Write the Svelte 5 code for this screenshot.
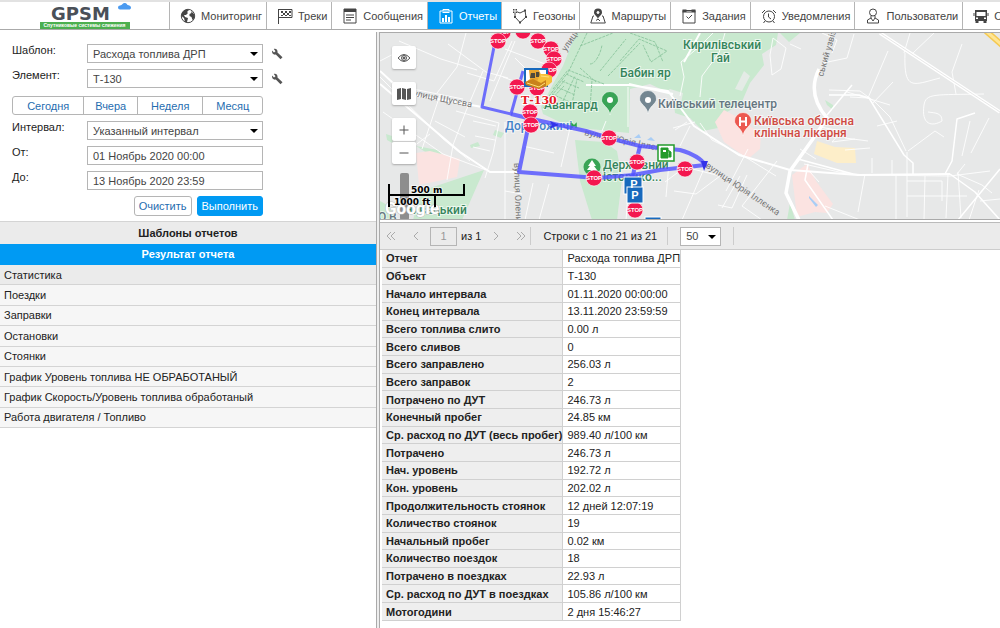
<script lang="ts">
	type Tab = { id: string; label: string };

	const tabs: Tab[] = [
		{ id: 'monitoring', label: 'Мониторинг' },
		{ id: 'tracks', label: 'Треки' },
		{ id: 'messages', label: 'Сообщения' },
		{ id: 'reports', label: 'Отчеты' },
		{ id: 'geofences', label: 'Геозоны' },
		{ id: 'routes', label: 'Маршруты' },
		{ id: 'jobs', label: 'Задания' },
		{ id: 'notifications', label: 'Уведомления' },
		{ id: 'users', label: 'Пользователи' },
		{ id: 'units', label: 'Объекты' }
	];

	const sections = [
		'Статистика',
		'Поездки',
		'Заправки',
		'Остановки',
		'Стоянки',
		'График Уровень топлива НЕ ОБРАБОТАНЫЙ',
		'График Скорость/Уровень топлива обработаный',
		'Работа двигателя / Топливо'
	];

	const stats = [
		['Отчет', 'Расхода топлива ДРП'],
		['Объект', 'Т-130'],
		['Начало интервала', '01.11.2020 00:00:00'],
		['Конец интервала', '13.11.2020 23:59:59'],
		['Всего топлива слито', '0.00 л'],
		['Всего сливов', '0'],
		['Всего заправлено', '256.03 л'],
		['Всего заправок', '2'],
		['Потрачено по ДУТ', '246.73 л'],
		['Конечный пробег', '24.85 км'],
		['Ср. расход по ДУТ (весь пробег)', '989.40 л/100 км'],
		['Потрачено', '246.73 л'],
		['Нач. уровень', '192.72 л'],
		['Кон. уровень', '202.02 л'],
		['Продолжительность стоянок', '12 дней 12:07:19'],
		['Количество стоянок', '19'],
		['Начальный пробег', '0.02 км'],
		['Количество поездок', '18'],
		['Потрачено в поездках', '22.93 л'],
		['Ср. расход по ДУТ в поездках', '105.86 л/100 км'],
		['Мотогодини', '2 дня 15:46:27']
	];

	const stops = [
		[503, 31], [498, 40], [523, 30], [538, 40], [551, 48], [554, 58], [549, 69],
		[517, 86], [537, 87], [530, 111], [531, 124], [609, 137], [637, 161],
		[594, 177], [685, 168], [635, 209]
	];

	let activeTab = $state('reports');
	let activeSection = $state('Статистика');
	let from = $state('01 Ноябрь 2020 00:00');
	let to = $state('13 Ноябрь 2020 23:59');
	let page = $state('1');
</script>

{#snippet arrow()}
	<svg class="arrow" viewBox="0 0 8 4" aria-hidden="true"><path d="M0 0h8L4 4z" /></svg>
{/snippet}

{#snippet wrench()}
	<button class="wrench" aria-label="Свойства">
		<svg viewBox="0 0 12 12"><path d="M1 2.500 3 4.500 4.500 3.200 2.800 1C5 .3 7 2 6.500 4.400L11.500 9.300 9.500 11.300 4.800 6.500C2.500 7.200.5 5 1 2.500z" fill="#555" /></svg>
	</button>
{/snippet}

{#snippet pin(x: number, y: number, fill: string)}
	<path
		transform="translate({x} {y})"
		d="M0 13C-1 5-8.500 3-8.500-2a8.500 8.500 0 0 1 17 0C8.500 3 1 5 0 13z"
		{fill}
		stroke="#fff"
		stroke-width=".6"
	/>
{/snippet}

{#snippet icon(id: string)}
	<svg class="icon" viewBox="0 0 16 16" aria-hidden="true">
		{#if id === 'monitoring'}
			<circle cx="8" cy="8" r="6.700" />
			<path class="solid" d="M2 5C4 1 8 1 9 2L7 4 8 5 6 7 4 7 5 9 8 10 7 14 5 14 4 10 1.500 8zM11 3l3 3 .5 4-2 2-1-3-2-1 0-2 2-1z" />
		{:else if id === 'tracks'}
			<path d="M1.500 1v15M1.500 1.500H15v8H1.500" />
			<path class="solid" d="M4 3h2v2H4zM8 3h2v2H8zM12 3h2v2h-2zM6 5h2v2H6zM10 5h2v2h-2zM4 7h2v1H4zM8 7h2v1H8zM12 7h2v1h-2z" />
		{:else if id === 'messages'}
			<path d="M2 1h12v14H2z" />
			<path class="solid" d="M2 1h12v3H2z" />
			<path d="M4 7h8M4 9.500h8M4 12h5" />
		{:else if id === 'reports'}
			<path d="M2 3h12v12H2zM5 3V1.500h6V3" />
			<path d="M4.500 4.500h7" />
			<path class="solid" d="M4 10h2v4H4zM7 7h2v7H7zM10 9h2v5h-2z" />
		{:else if id === 'geofences'}
			<path d="M3 3 8 5 13 2.500 14 9 8 14.500 3 9z" />
			<path class="solid" d="M1 1h4v4H1zM12 1.500h2v2h-2zM13 8h2v2h-2zM7 13.500h2v2H7zM2 8h2v2H2z" />
			<path d="M2 2h2v2H2z" stroke="#fff" />
		{:else if id === 'routes'}
			<path d="M4 8H3L.8 15h14.500L13 8h-1M6 12.500l2-1.500 2 2" />
			<path class="solid" d="M8 11C7.500 8 4 7.500 4 4.500a4 4 0 0 1 8 0C12 7.500 8.500 8 8 11z" />
			<circle cx="8" cy="4.500" r="1" stroke="#fff" fill="#fff" />
		{:else if id === 'jobs'}
			<path d="M2 2.500h12V15H2zM5.500 8.500l2 2L11 7" />
			<path class="solid" d="M1.500 1.500h4v2h5v-2h4v3h-13z" />
		{:else if id === 'notifications'}
			<circle cx="8" cy="8.500" r="5.500" />
			<path d="M7.500 5.500V9l2.500 2M1 5 4 2M15 5l-3-3M4 13l-1.500 2M12 13l1.500 2" />
		{:else if id === 'users'}
			<circle cx="8" cy="4.500" r="3.500" />
			<path d="M6 8v2L2.500 12v3h11v-3L10 10V8M6 10l2 3 2-3" />
		{:else}
			<path class="solid" fill-rule="evenodd" d="M2 2h12v11H2zM3.500 4v4h9V4zM3 9.500v1.500h2V9.500zM11 9.500v1.500h2V9.500zM2.500 13h3v2h-3zM10.500 13h3v2h-3zM.5 5h1v3h-1zM14.500 5h1v3h-1z" />
		{/if}
	</svg>
{/snippet}

<div class="app">
	<header>
		<a class="logo" href="#home" aria-label="GPSM">
			<span class="brand">GPSM</span>
			<svg class="cloud" viewBox="0 0 13 8" aria-hidden="true"><path d="M2 7.500a2 2 0 0 1 0-4C3 3 4 3 4.500 2a3 3 0 0 1 5 1C11 3 13 4 13 5.500s-1 2-2 2z" fill="#4a9af0" /></svg>
			<span class="slogan">Спутниковые системы слежения</span>
		</a>
		<nav>
			{#each tabs as tab (tab.id)}
				<button class="tab" class:active={activeTab === tab.id} onclick={() => (activeTab = tab.id)}>
					{@render icon(tab.id)}
					{tab.label}
				</button>
			{/each}
		</nav>
	</header>

	<main>
		<aside>
			<form onsubmit={(e) => e.preventDefault()}>
				<label for="template">Шаблон:</label>
				<div class="select">
					<select id="template"><option>Расхода топлива ДРП</option></select>
					{@render arrow()}
				</div>
				{@render wrench()}

				<label for="unit">Элемент:</label>
				<div class="select">
					<select id="unit"><option>Т-130</option></select>
					{@render arrow()}
				</div>
				{@render wrench()}

				<div class="periods">
					<button>Сегодня</button>
					<button>Вчера</button>
					<button>Неделя</button>
					<button>Месяц</button>
				</div>

				<label for="interval">Интервал:</label>
				<div class="select">
					<select id="interval"><option>Указанный интервал</option></select>
					{@render arrow()}
				</div>

				<label for="from">От:</label>
				<input id="from" type="text" bind:value={from} />

				<label for="to">До:</label>
				<input id="to" type="text" bind:value={to} />

				<div class="actions">
					<button type="reset">Очистить</button>
					<button type="submit" class="primary">Выполнить</button>
				</div>
			</form>

			<h2>Шаблоны отчетов</h2>
			<h2 class="current">Результат отчета</h2>
			<ul>
				{#each sections as section (section)}
					<li>
						<button class:selected={activeSection === section} onclick={() => (activeSection = section)}>
							{section}
						</button>
					</li>
				{/each}
			</ul>
		</aside>

		<div class="splitter"></div>

		<section class="content">
			<div class="map">
				<svg class="canvas" viewBox="380 32 620 187" preserveAspectRatio="xMidYMid slice">
					<rect x="380" y="32" width="620" height="187" fill="#e7e8e8" />

					<!-- parks, hospitals, built-up areas -->
					<g fill="#c9e9cf">
						<path d="M576 32H778L776 44 762 53 764 64 750 82 741 103 727 111 718 127 703 130 690 117 675 112 673 94 650 83 630 88 629 132 580 127 564 123 543 113 541 106 553 83 563 65z" />
						<path d="M575 139 604 141 617 150 622 178 617 219H592L580 180z" />
						<path d="M413 219 421 190 484 169 462 219z" />
						<path d="M386 133 395 136 394 143 387 139zM416 145l22 4 5 6-16-3zM495 129l9 3-3 5-8-3zM470 144l8-3 2 4-9 2zM780 32h20l-11 9zM825 99l8 5v5l-6-5zM790 202l5 17h-8zM380 200l9 5 8 14h-17z" />
					</g>
					<g fill="#fbe3e1">
						<path d="M416 152 430 150 460 158 457 176 419 184z" />
						<path d="M715 121 724 109 739 117 761 133 760 148 748 158 724 141z" />
						<path d="M792 174 807 163 816 180 833 203 827 212 815 211 797 216z" />
					</g>
					<path d="M817 140 835 146 855 147 856 162 837 162 814 153z" fill="#fdeec9" />
					<path d="M634 137l5-4 2 4zM647 139l4-3 4 4zM809 195l9 9-2 2-7-9z" fill="#a9cdf5" />
					<path d="M744 70 750 75 742 90 735 88zM664 92l6-4 13 4-2 10-10-4z" fill="#e4ebe6" />

					<!-- streets -->
					<g fill="none" stroke="#fff" stroke-linejoin="round">
						<g stroke-width="1" stroke-opacity=".85">
							<path d="M380 76 404 100 443 138 470 160M399 40l42 18 36 11M440 94l-18 54M466 32l-9 34-20 26M483 70l-17 40-13 34-6 35M383 111l60 42 43 16M448 43 486 71 508 77M413 88l50 10M467 72l27 8M456 110l43 12-6 30-8 25M473 120l23 5M475 135l20 4M490 150l-17-4M380 60l25-13M405 152l25-19M435 120l30 16M505 121v98M533 182l-8 37M549 183l-10 36M505 190l17 3M523 145l31 7M570 127l-9 39M512 40 494 80M505 48l40 15M515 57l30 30M503 76l32 12M490 100l25-60" />
							<path d="M628 86V126M629 180 626 219M606 120l-4 10M680 95 684 76 681 61 700 45 713 32M700 96 702 75 719 52 725 32M673 127l22-6M675 129l12-8M680 145l10-20M670 150l-4 46M665 181l20-15 35 9-24 18-22-3M706 163l-24 56M740 175l-18 32M747 174l-15 33-14-3M700 122l12 17 30 15 34 21M748 148l-22 42M777 160l-35 45 20 14" />
							<path d="M823 62l24-5 7-24M829 89l31 1 15 11 15 15 16 34M847 91l43 13M877 125l20-5M850 96l18 1 20-47M872 103l21-22M910 32l-6 20M905 52c-1 30 4 33 20 29l15-4M934 32l-21 20M962 43l-10 28 4 22M924 104c2-12 10-10 60-11M924 104c-3 20 8 22 18 16 0-8-6-8-14-9M908 150l27-20 9 6M804 163l35 8 25 3 86 1 40-5M865 173l-7 38M896 174v45M907 151v65M925 175l-1 44M948 173l-2 44M958 171l3 46M907 195h60M907 180h35v20M872 172v-15M892 174v-15M810 171l9 10M800 148l16 10M820 126l22 4-10 11 23-3M845 137l23 3M845 149l25-2" />
							<path d="M790 43 801 48M965 163l-8 10 25 11 10 8M979 189l-10 30M980 200l20-2M970 120l-8 35M971 152l18-35M822 32l15 7-5 13M825 205l35 14M770 54l3-17 13 10-5 21-9 6z" />
						</g>
						<path d="M380 70 405 93 444 99 482 106M380 83l80 68 30 20h29M586 84 630 84 668 90 694 125 739 154 790 169 858 174 950 173M629 83l44 10M700 32l-16 29" stroke-width="2" />
						<path d="M829 94h30l10 3 35 57 9 8v12M827 114l25-30M950 173l25 18 25 28M798 158l55 15M808 163l-3 16 28 40M1000 168l-42 51M945 173l7-13 5-42 18-6" stroke-width="1.500" />
						<path d="M819 68c-9 18-4 35 8 49l-12 18L790 170l-4 22 13 27M880 32l120 79" stroke-width="3.500" />
						<path d="M880 32l120 79" stroke="#ddd" stroke-width=".7" />
					</g>
					<path d="M553 88l15-19 36 14M549 95l17-21M546 101l19-22M543 107l21-22M563 100l12-25M572 103l5-25M590 107l2-28M552 93l20 9M557 86l18 8M562 80l17 7M566 73l18 8M587 32l-20 42M580 45 613 32M580 67l16 14M590 63c6 0 11-12 12-19M600 70l26-32M620 60l19-22 28 12-16 11-8-17M608 75l32-33M630 32l25 9 8 20" fill="none" stroke="#91c9a2" stroke-dasharray="3 1" />
					<path d="M986 30 1002 44" stroke="#f5c950" stroke-width="6" />
					<path d="M986 30 1002 44" stroke="#ffe594" stroke-width="3" />

					<!-- street and place names -->
					<g class="street">
						<text transform="translate(413 95) rotate(11)">улиця Щусєва</text>
						<text transform="translate(514 162) rotate(88)">вулиця Олени</text>
						<text transform="translate(584 134) rotate(12)">вулиця Юрія Іллєнка</text>
						<text transform="translate(705 166) rotate(34)">вулиця Юрія Іллєнка</text>
						<text transform="translate(566 51) rotate(-56)">улиця</text>
						<text transform="translate(823 76) rotate(-74)">ський узвіз</text>
					</g>
					<g class="place">
						<text x="683" y="48">Кирилівський</text>
						<text x="711" y="61">Гай</text>
						<text x="620" y="76">Бабин яр</text>
						<text x="544" y="108">Авангард</text>
						<text x="404" y="213">Нивацький</text>
						<text x="421" y="226">парк</text>
						<text x="603" y="168">Державний</text>
						<text x="603" y="180">історико...</text>
						<text x="658" y="107" fill="#657681">Київський телецентр</text>
						<text x="505" y="129" fill="#4381c8">Дорогожичі</text>
						<text x="754" y="124" fill="#cf4a42">Київська обласна</text>
						<text x="754" y="136" fill="#cf4a42">клінічна лікарня</text>
						<text x="378" y="220" fill="#667681">О.В.</text>
					</g>
					{@render pin(610, 101, '#39a456')}
					{@render pin(648, 100, '#738691')}
					{@render pin(743, 122, '#ec5951')}
					<circle cx="610" cy="99" r="3" fill="#fff" />
					<circle cx="648" cy="99" r="3" fill="#fff" />
					<path d="M740 116v9M746 116v9M740 120.500h6" stroke="#fff" stroke-width="2" />
					<circle cx="592" cy="166" r="8.500" fill="#39a456" />
					<path d="M592 159l-4 6h2l-3 4h4v3h2v-3h4l-3-4h2z" fill="#fff" />
					<path d="M572 127v-4l2 2 2-2v4" fill="none" stroke="#28a24c" stroke-width="1.500" />

					<!-- track -->
					<g fill="none" stroke="#5252ff" stroke-opacity=".82" stroke-linejoin="round">
						<path d="M494 46 482 106 511 113 523 70" stroke-width="3" />
						<path d="M511 113 532 118 586 130 609 137 640 145 680 149Q700 155 705 164L660 169 633 174 597 177 519 171 530 117" stroke-width="4" />
						<path d="M640 145 636 161 633 174 634 205" stroke-width="4" />
					</g>
					<path d="M550 120l9 4-10 4 3-4zM701 160l7 0-4 10z" fill="#3333e8" />

					<!-- parkings, stops, fuelling -->
					{#each stops as [x, y]}
						<g transform="translate({x} {y})">
							<circle r="8" fill="#f3174f" stroke="#fff" stroke-width=".6" />
							<text class="stop" y="2">STOP</text>
						</g>
					{/each}
					<g fill="#1769bd" stroke="#fff">
						<rect x="624" y="176" width="18" height="17" />
						<rect x="627" y="186" width="16" height="16" />
						<rect x="645" y="216" width="16" height="16" />
					</g>
					<text class="parking" x="634" y="187">P</text>
					<text class="parking" x="635" y="198">P</text>
					<rect x="658" y="144" width="16" height="16" fill="#fff" stroke="#239b2c" stroke-width="1.500" />
					<path d="M661 147h7v10h-7zM668 149l3 2v5h-2v-3" fill="#239b2c" stroke="#239b2c" />
					<path d="M663 149h3v2h-3z" fill="#fff" />
					<rect x="525" y="68" width="22" height="17" fill="#fff" stroke="#1769bd" stroke-width="2" />
					<path d="M529 69h10l3 7 2 8-8 3-10-6 4-3z" fill="#e8a62e" />
					<path d="M531 72h4v5h-5zM536 71h3l1 5h-4z" fill="#4f4a3c" />
					<path d="M540 73h7l5 2v6l-6 5-9-5z" fill="#f7bf3a" />
					<path d="M525 81l8-3 8 4 5-3v6l-7 3-13-4z" fill="#c9821b" />
					<path d="M527 82l12 4 6-4M541 75l8 1" fill="none" stroke="#ffe27a" />
					<text class="unit" x="521" y="103">Т-130</text>

					<!-- zoom track, scale -->
					<rect x="400" y="172" width="9" height="47" rx="2" fill="#8d8d8d" />
					<text class="google" x="385" y="213">Google</text>
					<path d="M389 183v23M389 194H464V183M435 194v12" fill="none" stroke="#000" stroke-width="2" />
					<g class="scale">
						<text x="411" y="192">500 m</text>
						<text x="394" y="204">1000 ft</text>
					</g>
				</svg>

				<div class="controls">
					<button aria-label="Видимость">
						<svg viewBox="0 0 14 14"><path d="M1 7q6-7 12 0-6 7-12 0z" /><circle cx="7" cy="7" r="2.500" /><circle cx="7" cy="7" r="1" fill="#555" /></svg>
					</button>
					<button aria-label="Слои">
						<svg viewBox="0 0 14 14"><path fill="#555" stroke="none" d="M0 2l4-1v11l-4 1zM5 1l4 1v11l-4-1zM10 2l4-1v11l-4 1z" /></svg>
					</button>
					<div class="zoom">
						<button aria-label="Приблизить"><svg viewBox="0 0 14 14"><path d="M7 2.500v9M2.500 7h9" /></svg></button>
						<button aria-label="Отдалить"><svg viewBox="0 0 14 14"><path d="M2.500 7h9" /></svg></button>
					</div>
				</div>
			</div>

			<div class="pager">
				<button aria-label="Первая"><svg viewBox="0 0 10 10"><path d="M5 1 1 5l4 4M9 1 5 5l4 4" /></svg></button>
				<button aria-label="Назад"><svg viewBox="0 0 10 10"><path d="M7 1 3 5l4 4" /></svg></button>
				<input type="text" aria-label="Страница" bind:value={page} />
				<span>из 1</span>
				<button aria-label="Вперед"><svg viewBox="0 0 10 10"><path d="M3 1l4 4-4 4" /></svg></button>
				<button aria-label="Последняя"><svg viewBox="0 0 10 10"><path d="M1 1l4 4-4 4M5 1l4 4-4 4" /></svg></button>
				<i></i>
				<span>Строки с 1 по 21 из 21</span>
				<i></i>
				<div class="select size">
					<select aria-label="Строк на странице"><option>50</option></select>
					{@render arrow()}
				</div>
				<i></i>
			</div>

			<div class="report">
				<table>
					<tbody>
						{#each stats as [name, value]}
							<tr>
								<th scope="row">{name}</th>
								<td>{value}</td>
							</tr>
						{/each}
					</tbody>
				</table>
			</div>
		</section>
	</main>
</div>

<style>
	:global(body) {
		background: #fff;
	}

	.app {
		display: flex;
		flex-direction: column;
		min-height: 100vh;
		font: 11px/12px 'Liberation Sans', Arial, sans-serif;
		color: #222;
		overflow: hidden;
	}

	.app * {
		box-sizing: border-box;
	}

	button,
	input,
	select {
		margin: 0;
		padding: 0;
		font: inherit;
		color: inherit;
		border: 0;
		border-radius: 0;
		background: none;
	}

	button {
		cursor: pointer;
	}

	/* header */
	header {
		display: flex;
		height: 30px;
		border-top: 2px solid #e2e2e2;
		border-bottom: 1px solid #aaa;
	}

	.logo {
		position: relative;
		display: flex;
		flex: 0 0 169px;
		flex-direction: column;
		align-items: center;
		padding: 4px 0 0 0;
		text-decoration: none;
	}

	.brand {
		padding-right: 8px;
		font: bold 18px/16px 'DejaVu Sans', Verdana, sans-serif;
		color: #4a5058;
	}

	.cloud {
		position: absolute;
		top: 0;
		left: 118px;
		width: 13px;
		height: 8px;
	}

	.slogan {
		width: 90px;
		background: #4caf50;
		color: #fff;
		font: bold 5px/7px 'Liberation Sans', Arial, sans-serif;
		text-align: center;
	}

	nav {
		display: flex;
		flex: 1;
		min-width: 0;
		overflow: hidden;
	}

	.tab {
		display: flex;
		flex: none;
		align-items: center;
		gap: 5px;
		padding: 0 4px 0 10px;
		border-left: 1px solid #b5b5b5;
		color: #444;
		white-space: nowrap;
	}

	.tab.active {
		background: #009af3;
		color: #fff;
	}

	.icon {
		width: 16px;
		height: 16px;
		fill: none;
		stroke: currentColor;
	}

	.icon .solid {
		fill: currentColor;
		stroke: none;
	}

	/* report parameters */
	main {
		display: grid;
		flex: 1;
		grid-template-columns: 376fr 4px 620fr;
		padding-top: 2px;
	}

	aside,
	.content {
		min-width: 0;
	}

	form {
		display: grid;
		grid-template-columns: 75px 176px 20px;
		gap: 6px 0;
		padding: 12px 12px 5px;
		color: #444;
	}

	form label {
		grid-column: 1;
		color: #222;
	}

	form input,
	select {
		display: block;
		width: 100%;
		height: 19px;
		padding: 0 5px;
		border: 1px solid #b5b5b5;
		background: #fff;
		color: #444;
		appearance: none;
	}

	.select {
		position: relative;
	}

	.arrow {
		position: absolute;
		top: 8px;
		right: 5px;
		width: 8px;
		height: 4px;
		pointer-events: none;
	}

	.wrench {
		display: grid;
		align-items: center;
		padding-left: 8px;
		height: 19px;
	}

	.wrench svg {
		width: 12px;
		height: 12px;
	}

	.periods {
		display: grid;
		grid-column: 1 / 3;
		grid-template-columns: 71fr 54fr 66fr 60fr;
		height: 19px;
		margin: 2px 0 0;
		border: 1px solid #b5b5b5;
		border-radius: 3px;
		color: #1f6db0;
	}

	.periods button + button {
		border-left: 1px solid #b5b5b5;
	}

	.actions {
		display: flex;
		grid-column: 1 / 3;
		justify-content: flex-end;
		gap: 5px;
	}

	.actions button {
		height: 20px;
		padding: 0 4px;
		border: 1px solid #b5b5b5;
		border-radius: 3px;
		color: #1f6db0;
	}

	.actions .primary {
		border-color: #009af3;
		background: #009af3;
		color: #fff;
	}

	h2 {
		margin: 0;
		border-top: 1px solid #d4d4d4;
		background: #ebebeb;
		font-size: 11px;
		line-height: 22px;
		text-align: center;
	}

	h2.current {
		border: 0;
		background: #009af3;
		color: #fff;
		line-height: 21px;
	}

	ul {
		display: grid;
		grid-auto-rows: 1fr;
		height: 163px;
		margin: 0;
		padding: 0;
		list-style: none;
	}

	li {
		display: grid;
	}

	li button {
		padding: 0 4px;
		border-bottom: 1px solid #d4d4d4;
		background: #f6f6f6;
		text-align: left;
	}

	li .selected {
		background: #ebebeb;
	}

	.splitter {
		border: solid #aaa;
		border-width: 0 1px;
		background: #eee;
	}

	/* map */
	.content {
		display: flex;
		flex-direction: column;
	}

	.map {
		position: relative;
		height: 188px;
		border-top: 1px solid #aaa;
		border-bottom: 1px solid #aaa;
		overflow: hidden;
	}

	.canvas {
		display: block;
		width: 100%;
		height: 187px;
	}

	.street {
		font: 9px Roboto, sans-serif;
		fill: #757575;
	}

	.place {
		font: 500 12px Roboto, sans-serif;
		fill: #35845b;
		stroke: #fff;
		stroke-opacity: 0.6;
		stroke-width: 2px;
		paint-order: stroke;
	}

	.stop {
		font: bold 6px 'Liberation Sans', sans-serif;
		fill: #fff;
		text-anchor: middle;
	}

	.parking {
		font: bold 11px 'Liberation Sans', sans-serif;
		fill: #fff;
		text-anchor: middle;
	}

	.unit {
		font: bold 11px 'DejaVu Serif', serif;
		fill: #e6191f;
		stroke: #fff;
		stroke-width: 2px;
		paint-order: stroke;
	}

	.google {
		font: bold 17px Roboto, sans-serif;
		fill: #fff;
		stroke: #bbb;
		stroke-width: 1px;
		paint-order: stroke;
	}

	.scale {
		font: bold 9px 'DejaVu Sans', sans-serif;
		stroke: #fff;
		stroke-opacity: 0.6;
		stroke-width: 2px;
		paint-order: stroke;
	}

	.controls {
		position: absolute;
		top: 13px;
		left: 12px;
		display: grid;
		gap: 13px;
	}

	.controls button {
		display: grid;
		place-items: center;
		width: 24px;
		height: 23px;
		border-radius: 2px;
		background: #fff;
		box-shadow: 0 1px 2px #aaa;
	}

	.controls .zoom button + button {
		border-top: 1px solid #ccc;
	}

	.controls svg {
		width: 14px;
		height: 14px;
		fill: none;
		stroke: #555;
	}

	/* pager */
	.pager {
		display: flex;
		align-items: center;
		height: 28px;
		margin-top: 2px;
		padding-left: 6px;
		border-top: 1px solid #bbb;
		border-bottom: 1px solid #ccc;
		background: #ebebeb;
		white-space: nowrap;
	}

	.pager button {
		width: 10px;
		margin-right: 15px;
	}

	.pager button svg {
		display: block;
		width: 10px;
		height: 10px;
		fill: none;
		stroke: #aaa;
	}

	.pager input {
		width: 27px;
		height: 19px;
		margin-right: 4px;
		margin-left: -6px;
		border: 1px solid #b5b5b5;
		color: #999;
		text-align: center;
	}

	.pager span {
		margin-right: 10px;
	}

	.pager button:has(+ i) {
		margin-right: 4px;
	}

	.pager i {
		height: 18px;
		margin-right: 12px;
		border-left: 1px solid #ccc;
	}

	.size {
		width: 41px;
		margin-right: 12px;
	}

	/* statistics */
	.report {
		display: grid;
		flex: 1;
		padding: 0 0 7px 2px;
	}

	table {
		width: 298px;
		border-collapse: separate;
		border-spacing: 0;
	}

	th,
	td {
		padding: 0 0 0 4px;
		border: solid #d0d0d0;
		border-width: 0 1px 1px 0;
		text-align: left;
		white-space: nowrap;
	}

	th {
		width: 181px;
		background: #eee;
	}
</style>
